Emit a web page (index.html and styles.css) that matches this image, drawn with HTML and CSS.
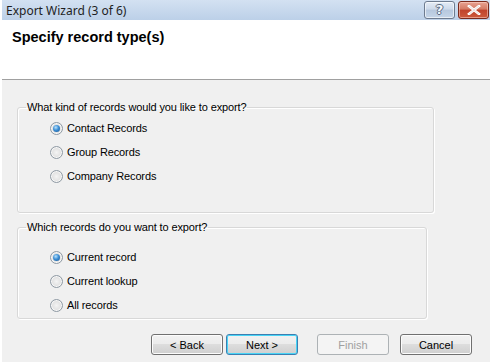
FILE: index.html
```html
<!DOCTYPE html>
<html>
<head>
<meta charset="utf-8">
<link rel="stylesheet" href="styles.css">
</head>
<body>
<div class="window">
  <div class="titlebar">
    <span class="title">Export Wizard (3 of 6)</span>
    <div class="caption-buttons">
      <div class="cbtn help"><span>?</span></div>
      <div class="cbtn close">
        <svg width="14" height="10" viewBox="0 0 14 10"><path d="M2 1 L12 9 M12 1 L2 9" stroke="#ffffff" stroke-width="2.6" stroke-linecap="square"/><path d="M2 1 L12 9 M12 1 L2 9" stroke="#6e2a20" stroke-width="0.4" fill="none" opacity="0.4"/></svg>
      </div>
    </div>
  </div>
  <div class="header">
    <h1 class="heading">Specify record type(s)</h1>
  </div>
  <div class="content">
    <fieldset class="group g1">
      <legend>What kind of records would you like to export?</legend>
      <div class="options">
        <label class="radio"><span class="dot checked"></span>Contact Records</label>
        <label class="radio"><span class="dot"></span>Group Records</label>
        <label class="radio"><span class="dot"></span>Company Records</label>
      </div>
    </fieldset>
    <fieldset class="group g2">
      <legend>Which records do you want to export?</legend>
      <div class="options">
        <label class="radio"><span class="dot checked"></span>Current record</label>
        <label class="radio"><span class="dot"></span>Current lookup</label>
        <label class="radio"><span class="dot"></span>All records</label>
      </div>
    </fieldset>
    <div class="buttons">
      <button class="btn">&lt; Back</button>
      <button class="btn default">Next &gt;</button>
      <button class="btn disabled">Finish</button>
      <button class="btn">Cancel</button>
    </div>
  </div>
</div>
</body>
</html>
```
FILE: styles.css
```css
html, body {
  margin: 0;
  padding: 0;
  background: #ffffff;
}
body {
  width: 494px;
  height: 362px;
  overflow: hidden;
  font-family: "Liberation Sans", Arial, sans-serif;
  font-size: 11px;
  letter-spacing: -0.12px;
  color: #000;
}
.window {
  margin-left: 2px;
  width: 488px;
  height: 362px;
  background: #f0f0f0;
  display: flex;
  flex-direction: column;
}
.titlebar {
  height: 20px;
  background: linear-gradient(#d3e1f2, #bcd0e8);
  display: flex;
  align-items: center;
  justify-content: space-between;
}
.title {
  font-family: "Noto Sans", "DejaVu Sans", sans-serif;
  font-size: 12px;
  letter-spacing: 0;
  margin-left: 4px;
  color: #1e1e1e;
}
.caption-buttons {
  display: flex;
  gap: 3px;
  margin-right: 1px;
  align-self: flex-start;
  margin-top: 1px;
}
.cbtn {
  width: 29px;
  height: 16px;
  border: 1px solid #6d7b8f;
  border-radius: 3px;
  display: flex;
  align-items: center;
  justify-content: center;
  box-sizing: content-box;
}
.help {
  background: linear-gradient(#e4ecf6 0%, #cddaea 45%, #b6c8de 50%, #c5d5e8 100%);
  box-shadow: inset 0 0 0 1px rgba(255,255,255,0.6);
}
.help span {
  font-family: "DejaVu Sans", sans-serif;
  font-weight: bold;
  font-size: 13px;
  color: #f4f7fb;
  text-shadow: 1px 0 0 #5a6a82, -1px 0 0 #5a6a82, 0 1px 0 #5a6a82, 0 -1px 0 #5a6a82;
  line-height: 14px;
}
.close {
  border-color: #7a2a1c;
  background: linear-gradient(#e8a392 0%, #d47a64 45%, #c0432b 50%, #cd5a3c 100%);
  box-shadow: inset 0 0 0 1px rgba(255,220,210,0.5);
}
.header {
  height: 59px;
  background: #ffffff;
  border-bottom: 1px solid #a0a0a0;
  padding-left: 10px;
}
.heading {
  margin: 9px 0 0 0;
  font-family: "Liberation Sans", Arial, sans-serif;
  font-weight: bold;
  font-size: 14.5px;
  letter-spacing: 0;
  line-height: 17px;
}
.content {
  flex: 1;
  display: flex;
  flex-direction: column;
  padding: 20px 0 0 15px;
}
.group {
  margin: 0;
  padding: 0;
  border: 1px solid #d8d8d8;
  border-radius: 3px;
  box-shadow: 1px 1px 0 #ffffff, inset 1px 1px 0 #ffffff;
  box-sizing: border-box;
}
.group legend {
  padding: 0 1px;
  margin-left: 8px;
  line-height: 14px;
  font-size: 11px;
}
.g1 {
  width: 417px;
  height: 113px;
}
.g2 {
  width: 410px;
  height: 99px;
  margin-top: 7px;
}
.options {
  display: flex;
  flex-direction: column;
  gap: 11px;
  padding-left: 32px;
}
.g1 .options { padding-top: 8px; }
.g2 .options { padding-top: 17px; }
.radio {
  display: flex;
  align-items: center;
  gap: 4px;
  height: 13px;
  line-height: 13px;
}
.dot {
  width: 11px;
  height: 11px;
  border-radius: 50%;
  border: 1px solid #8f9aa4;
  background: radial-gradient(circle at 50% 50%, #f4f4f4 0%, #e2e2e2 55%, #cfcfcf 100%);
  box-shadow: inset 0 0 0 1px #f8f8f8;
  position: relative;
}
.dot.checked::after {
  content: "";
  position: absolute;
  left: 2px;
  top: 2px;
  width: 7px;
  height: 7px;
  border-radius: 50%;
  background: radial-gradient(circle at 40% 35%, #b9e2fb 0%, #3c8fd6 45%, #16508c 100%);
}
.buttons {
  display: flex;
  margin-top: 15px;
  padding-left: 134px;
}
.btn {
  width: 72px;
  height: 21px;
  padding: 0;
  font-family: "Liberation Sans", Arial, sans-serif;
  font-size: 11px;
  color: #000;
  border: 1px solid #707070;
  border-radius: 3px;
  background: linear-gradient(#f2f2f2 0%, #ebebeb 50%, #dddddd 50%, #cfcfcf 100%);
  box-shadow: inset 0 0 0 1px #fcfcfc;
}
.btn + .btn { margin-left: 3px; }
.btn.default {
  border-color: #3c7fb1;
  box-shadow: inset 0 0 0 1px #48d4f6;
}
.btn.disabled {
  margin-left: 19px;
  border-color: #adb2b5;
  background: #f4f4f4;
  color: #a0a0a0;
  box-shadow: none;
}
.btn.disabled + .btn { margin-left: 11px; }
```
